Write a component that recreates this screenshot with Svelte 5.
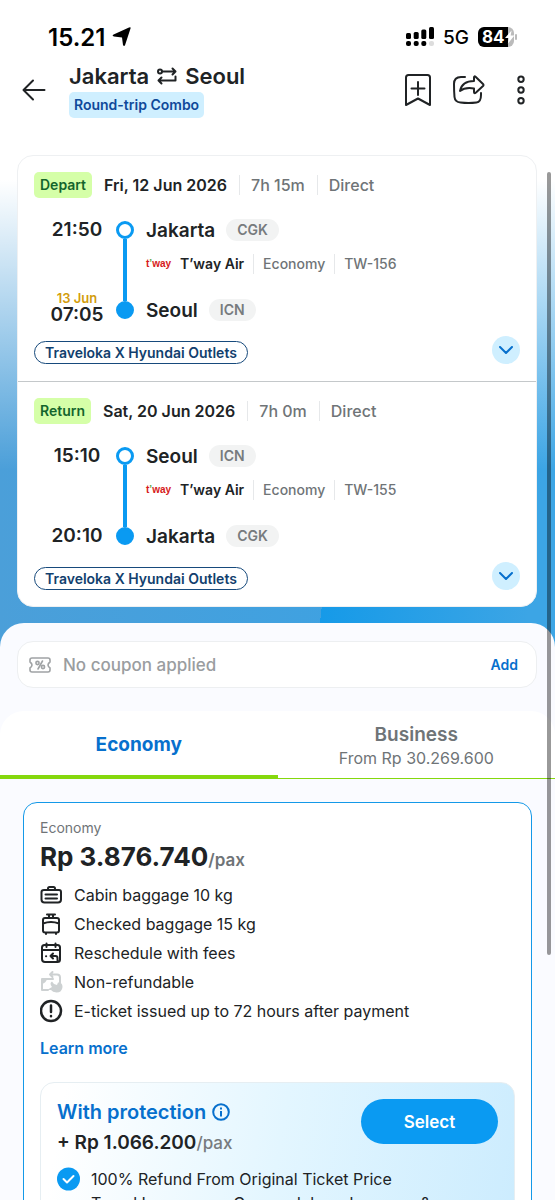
<script lang="ts">
	const legs = [
		{
			label: 'Depart',
			date: 'Fri, 12 Jun 2026',
			duration: '7h 15m',
			from: { time: '21:50', city: 'Jakarta', code: 'CGK' },
			to: { time: '07:05', day: '13 Jun', city: 'Seoul', code: 'ICN' },
			flight: 'TW-156'
		},
		{
			label: 'Return',
			date: 'Sat, 20 Jun 2026',
			duration: '7h 0m',
			from: { time: '15:10', city: 'Seoul', code: 'ICN' },
			to: { time: '20:10', day: '', city: 'Jakarta', code: 'CGK' },
			flight: 'TW-155'
		}
	];

	const perks = [
		{ icon: 'cabin', text: 'Cabin baggage 10 kg' },
		{ icon: 'checked', text: 'Checked baggage 15 kg' },
		{ icon: 'calendar', text: 'Reschedule with fees' },
		{ icon: 'refund', text: 'Non-refundable' },
		{ icon: 'alert', text: 'E-ticket issued up to 72 hours after payment' }
	];

	let cabin = $state('economy');
</script>

<div class="page">
	<div class="status">
		<span class="clock">15.21</span>
		<svg class="locate" width="20" height="20" viewBox="0 0 20 20"><path d="M18.5 1.500 L13 18.3 Q12 20 11 18 L10 10.500 L2 9.500 Q-.5 8.700 1.600 7.500 L17 .5 Q19.300 -.2 18.500 1.500Z" /></svg>
		<svg class="signal" width="28" height="20" viewBox="0 0 28 20">
			<rect x="0" y="6" width="5" height="6" rx="1.5" />
			<rect x="7.7" y="5" width="5" height="7" rx="1.5" />
			<rect x="15.3" y="2.5" width="5" height="9.5" rx="1.5" />
			<rect x="23" y="0" width="5" height="12" rx="1.5" />
			<rect x="0" y="14" width="5" height="5" rx="2" />
			<rect x="7.7" y="14" width="5" height="5" rx="2" />
			<rect x="15.3" y="14" width="5" height="5" rx="2" />
			<rect x="23" y="14" width="5" height="5" rx="2" fill="#ddd" />
		</svg>
		<span class="network">5G</span>
		<span class="battery">
			84
			<svg width="10" height="14" viewBox="0 0 10 14"><path d="M7 0 L0 8 H4 L3 14 L10 5.500 H6Z" fill="#fff" /></svg>
		</span>
		<i class="battery-tip"></i>
	</div>

	<header>
		<button class="icon-button" aria-label="Back">
			<svg width="24" height="24" viewBox="0 0 24 24" class="line"><path d="M22.500 12H2M11 2.500 1.500 12l9.500 9.500" /></svg>
		</button>
		<div class="heading">
			<h1>
				Jakarta
				<svg width="20" height="18" viewBox="0 0 20 18" class="line"><circle cx="3" cy="4.500" r="2" /><path d="M5 4.500H18.500M15.500 1.500l3 3-3 3M18.500 9.500v4H1.500M4.500 10.500l-3 3 3 3" /></svg>
				Seoul
			</h1>
			<span class="combo">Round-trip Combo</span>
		</div>
		<button class="icon-button" aria-label="Save">
			<svg width="26" height="32" viewBox="0 0 26 32" class="line"><path d="M1 31V3.500Q1 1 3.500 1H22.500Q25 1 25 3.500V31L13 24.500ZM13 8v13M6.500 14.500h13" /></svg>
		</button>
		<button class="icon-button share" aria-label="Share">
			<svg width="32" height="30" viewBox="0 0 32 30" class="line"><path d="M12 2H8Q1 2 1 9q0 7 .5 13 .5 5 6 5.500 8 1 16 0Q28 27 28 20v-2" /><path d="M7 16Q9 6 21 6V2.500Q21 .5 22.800 2L30 9q1 1 0 2l-7 6.500Q21 19 21 17v-3.500Q12 12 7 16Z" /></svg>
		</button>
		<button class="icon-button" aria-label="More options">
			<svg width="10" height="30" viewBox="0 0 10 30" class="line"><circle cx="5" cy="4.200" r="2.700" /><circle cx="5" cy="15" r="2.700" /><circle cx="5" cy="25.700" r="2.700" /></svg>
		</button>
	</header>

	<section class="hero">
		<div class="itinerary">
			{#each legs as leg}
				<article class="leg">
					<div class="leg-head">
						<span class="tag">{leg.label}</span>
						<strong>{leg.date}</strong>
						<span class="split">{leg.duration}</span>
						<span class="split">Direct</span>
					</div>
					<div class="route">
						<div class="times">
							<div class="stop-time">{leg.from.time}</div>
							<div class="stop-time">
								{#if leg.to.day}<small>{leg.to.day}</small>{/if}
								{leg.to.time}
							</div>
						</div>
						<div class="rail"><i class="dot"></i><i class="track"></i><i class="dot filled"></i></div>
						<div class="places">
							<div class="place">{leg.from.city}<span class="code">{leg.from.code}</span></div>
							<div class="airline">
								<span class="logo">t<b>’</b>way</span>
								<strong>T’way Air</strong>
								<span class="split">Economy</span>
								<span class="split">{leg.flight}</span>
							</div>
							<div class="place">{leg.to.city}<span class="code">{leg.to.code}</span></div>
						</div>
					</div>
					<div class="leg-foot">
						<span class="promo">Traveloka X Hyundai Outlets</span>
						<button class="expand" aria-label="Show {leg.label} details">
							<svg width="14" height="8" viewBox="0 0 14 8"><path d="M1 1l6 6 6-6" fill="none" stroke="#0770cd" stroke-width="2" stroke-linecap="round" stroke-linejoin="round" /></svg>
						</button>
					</div>
				</article>
			{/each}
		</div>
	</section>

	<main>
		<div class="coupon">
			<svg width="22" height="16" viewBox="0 0 22 16" fill="none" stroke="#a0a3a5" stroke-width="1.600" stroke-linejoin="round" stroke-linecap="round"><path d="M3 1H19Q21 1 21 3v2q-4 3 0 6v2q0 2-2 2H3Q1 15 1 13v-2Q5 8 1 5V3Q1 1 3 1Z" /><path d="M13.500 4 9 12" /><circle cx="8.500" cy="6" r="1.600" /><circle cx="14" cy="10" r="1.600" /></svg>
			<span>No coupon applied</span>
			<button>Add</button>
		</div>

		<div class="tabs" role="tablist">
			<button role="tab" class:active={cabin === 'economy'} aria-selected={cabin === 'economy'} onclick={() => (cabin = 'economy')}>
				<strong>Economy</strong>
			</button>
			<button role="tab" class:active={cabin === 'business'} aria-selected={cabin === 'business'} onclick={() => (cabin = 'business')}>
				<strong>Business</strong>
				<span>From Rp 30.269.600</span>
			</button>
		</div>

		<section class="fare">
			<p class="fare-name">Economy</p>
			<p class="price">Rp 3.876.740<span>/pax</span></p>
			<ul>
				{#each perks as perk}
					<li>
						<svg width="24" height="24" viewBox="0 0 24 24" class="perk {perk.icon}">
							{#if perk.icon === 'cabin'}
								<path d="M8 7V5.500Q8 4 9.500 4h4Q15 4 15 5.500V7M4 7H19Q21 7 21 9v7.500q0 3-3 3H4.500q-3 0-3-3V9Q1.500 7 4 7ZM5.500 11.500H17M5.500 15.500H17" />
							{:else if perk.icon === 'checked'}
								<path d="M7 2.500H15M9 2.500V6M13 2.500V6M5 6H17Q19 6 19 8V18.500q0 2-2 2H5q-2 0-2-2V8Q3 6 5 6ZM3 11.500Q11 8.500 19 11.500M6 21v1M16 21v1" />
							{:else if perk.icon === 'calendar'}
								<path d="M4.500 4h13Q20 4 20 6.500v12q0 2.500-2.500 2.500H5Q2 21 2 18V6.500Q2 4 4.500 4ZM2 9H20M6.500 2.500V6M15.500 2.500V6M17.500 19.500V17q0-2-2-2H10.500M13 12.500 10.500 15l2.500 2.500M6 15.200h.2" />
							{:else if perk.icon === 'refund'}
								<path d="M10 4.500h7q3 0 3 3v5M12.500 2 10 4.500 12.500 7M13 9H2V20H8" />
								<path class="solid" d="M2 9H7Q6 13 2 14ZM7 20 12 17Q9 13 12 11.500 L14 14 17 15 18 12.500Q22.500 12 22.500 17 22 22.500 16.500 22.500 12.500 22 11 20Z" />
							{:else}
								<circle cx="11" cy="12" r="10" /><path d="M11 6.500V13M11 17v.2" />
							{/if}
						</svg>
						{perk.text}
					</li>
				{/each}
			</ul>
			<a href="#details">Learn more</a>

			<div class="protection">
				<div class="protection-head">
					<div>
						<h2>
							With protection
							<svg width="18" height="18" viewBox="0 0 18 18" fill="none" stroke="#0770cd" stroke-width="2"><circle cx="9" cy="9" r="7.800" /><path d="M9 8v5.500M9 4.500v2" /></svg>
						</h2>
						<p class="extra">+ Rp 1.066.200<span>/pax</span></p>
					</div>
					<button class="select">Select</button>
				</div>
				<div class="benefit">
					<svg width="24" height="24" viewBox="0 0 24 24"><circle cx="11.500" cy="12" r="11.500" fill="#0a9af2" /><path d="M6.500 12l3.500 3.500L16.500 9" fill="none" stroke="#fff" stroke-width="2" stroke-linecap="round" stroke-linejoin="round" /></svg>
					<div>
						<p>100% Refund From Original Ticket Price</p>
						<p>Travel Insurance – Covers delays, baggage &amp;</p>
					</div>
				</div>
			</div>
		</section>
	</main>
	<div class="scrollbar"></div>
</div>

<style>
	:global(body) {
		margin: 0;
	}

	.page {
		position: relative;
		height: 100vh;
		overflow: hidden;
		background: #fff;
		color: #202325;
		font-family: Inter, 'Liberation Sans', sans-serif;
		font-weight: 400;
	}

	.page * {
		box-sizing: border-box;
	}

	h1, h2, p, ul {
		margin: 0;
		padding: 0;
	}

	button {
		border: 0;
		padding: 0;
		background: none;
		color: inherit;
		font: inherit;
		cursor: pointer;
	}

	strong {
		font-weight: 600;
	}

	.line {
		fill: none;
		stroke: #202325;
		stroke-width: 2;
		stroke-linecap: round;
		stroke-linejoin: round;
	}

	.status {
		display: flex;
		align-items: center;
		height: 60px;
		padding: 14px 38px 0 48px;
		color: #000;
	}

	.clock {
		font-size: 24px;
		font-weight: 600;
	}

	.locate {
		margin-left: 7px;
	}

	.signal {
		margin-left: auto;
	}

	.network {
		margin-left: 9px;
		font-size: 19px;
		font-weight: 500;
	}

	.battery {
		display: flex;
		align-items: center;
		width: 36px;
		height: 20px;
		margin-left: 9px;
		padding-left: 4px;
		border-radius: 6px;
		background: linear-gradient(90deg, #000 84%, #bbb 84%);
		color: #fff;
		font-size: 17px;
		font-weight: 700;
	}

	.battery-tip {
		width: 2px;
		height: 6px;
		margin-left: 1px;
		border-radius: 2px;
		background: #bbb;
	}

	header {
		display: flex;
		align-items: center;
		height: 60px;
		padding: 0 29px 0 22px;
	}

	.icon-button {
		display: flex;
		margin-left: 31px;
	}

	.icon-button:first-child {
		margin-left: 0;
	}

	.icon-button.share {
		margin-left: 22px;
	}

	.heading {
		flex: 1;
		margin-left: 23px;
	}

	h1 {
		display: flex;
		align-items: center;
		gap: 8px;
		font-size: 22px;
		font-weight: 600;
		line-height: 28px;
	}

	.combo {
		display: inline-block;
		margin-top: 2px;
		padding: 0 5px;
		border-radius: 5px;
		background: #cfefff;
		color: #10499a;
		font-size: 14px;
		font-weight: 600;
		line-height: 26px;
	}

	.hero {
		padding: 35px 18px 48px 17px;
		background:
			linear-gradient(180deg, #fff 0, #fff 60px, rgba(255, 255, 255, 0) 350px),
			linear-gradient(96deg, transparent 61%, #169ae8 61%, #3ca5e5 95%),
			linear-gradient(90deg, #4b9fd9, #37a3e6);
	}

	.itinerary {
		border: 1px solid #eef0f2;
		border-radius: 16px;
		background: #fff;
	}

	.leg {
		padding: 16px 16px 17px;
	}

	.leg + .leg {
		padding-bottom: 16px;
		border-top: 1px solid #c4c8ca;
	}

	.leg-head {
		display: flex;
		align-items: center;
		gap: 12px;
		height: 26px;
		font-size: 16px;
	}

	.tag {
		padding: 0 6px;
		border-radius: 5px;
		background: #d5ffa8;
		color: #13652c;
		font-size: 14px;
		font-weight: 600;
		line-height: 26px;
	}

	.split {
		padding-left: 11px;
		border-left: 1px solid #e6e8ea;
		color: #6f7477;
		font-weight: 500;
	}

	.route {
		display: flex;
		height: 108px;
		margin-top: 18px;
	}

	.times {
		display: flex;
		flex-direction: column;
		justify-content: space-between;
		width: 82px;
		padding-left: 4px;
		text-align: center;
	}

	.stop-time {
		display: flex;
		flex-direction: column;
		justify-content: center;
		min-height: 28px;
		font-size: 19px;
		font-weight: 600;
		line-height: 18px;
	}

	small {
		color: #d29c0c;
		font-size: 13px;
		line-height: 16px;
	}

	.rail {
		display: flex;
		flex-direction: column;
		align-items: center;
		width: 18px;
		padding: 5px 0;
	}

	.dot {
		width: 18px;
		height: 18px;
		border: 3px solid #0a9af2;
		border-radius: 50%;
	}

	.filled {
		background: #0a9af2;
	}

	.track {
		flex: 1;
		width: 4px;
		background: #0a9af2;
	}

	.places {
		margin-left: 12px;
	}

	.place {
		display: flex;
		align-items: center;
		gap: 11px;
		height: 28px;
		font-size: 19px;
		font-weight: 600;
	}

	.code {
		padding: 0 11px;
		border-radius: 12px;
		background: #f2f3f3;
		color: #777b7e;
		font-size: 14px;
		line-height: 22px;
	}

	.airline {
		display: flex;
		align-items: center;
		gap: 9px;
		margin: 10px 0 22px;
		font-size: 14px;
		line-height: 20px;
	}

	.airline .split {
		padding-left: 9px;
	}

	.logo {
		width: 25px;
		color: #d61920;
		font-family: 'Liberation Sans Narrow', 'Liberation Sans', sans-serif;
		font-size: 10px;
		font-weight: 700;
	}

	.logo b {
		color: #62a744;
	}

	.leg-foot {
		display: flex;
		align-items: flex-end;
		justify-content: space-between;
		margin-top: 12px;
	}

	.promo {
		padding: 0 10px;
		border: 1px solid #174a7c;
		border-radius: 12px;
		color: #123f6e;
		font-size: 14px;
		font-weight: 600;
		line-height: 21px;
	}

	.expand {
		display: flex;
		align-items: center;
		justify-content: center;
		width: 28px;
		height: 28px;
		border-radius: 50%;
		background: #cfefff;
	}

	main {
		position: relative;
		margin-top: -32px;
		padding-top: 18px;
		border-radius: 24px 24px 0 0;
		background: #fafbff;
	}

	.coupon {
		display: flex;
		align-items: center;
		gap: 12px;
		height: 47px;
		margin: 0 18px 0 17px;
		padding: 0 18px 0 11px;
		border: 1px solid #edeff1;
		border-radius: 16px;
		background: #fff;
		color: #9a9da0;
		font-size: 17px;
		font-weight: 500;
	}

	.coupon button {
		margin-left: auto;
		color: #0770cd;
		font-size: 14px;
		font-weight: 600;
	}

	.tabs {
		display: grid;
		grid-template-columns: 1fr 1fr;
		height: 68px;
		margin-top: 23px;
		border-radius: 24px 24px 0 0;
		background: #fff;
	}

	.tabs button {
		display: flex;
		flex-direction: column;
		align-items: center;
		justify-content: center;
		padding-top: 2px;
		border-bottom: 1px solid #85d80d;
		color: #6f7477;
		font-size: 16px;
		line-height: 22px;
	}

	.tabs strong {
		font-size: 19px;
		line-height: 24px;
	}

	.tabs .active {
		padding-top: 4px;
		border-bottom-width: 4px;
		color: #0770cd;
	}

	.active strong {
		font-weight: 700;
	}

	.fare {
		margin: 23px 23px 0;
		padding: 16px;
		border: 1px solid #1499e8;
		border-radius: 14px;
		background: #fff;
	}

	.fare-name {
		color: #6f7477;
		font-size: 14px;
		line-height: 18px;
	}

	.price {
		font-size: 26px;
		font-weight: 700;
		line-height: 39px;
	}

	.price span {
		color: #6f7477;
		font-size: 17px;
		font-weight: 600;
	}

	ul {
		list-style: none;
	}

	li {
		display: flex;
		align-items: center;
		gap: 10px;
		height: 29px;
		font-size: 16px;
	}

	.perk {
		fill: none;
		stroke: #202325;
		stroke-width: 2;
		stroke-linecap: round;
		stroke-linejoin: round;
	}

	.refund {
		stroke: #cdd1d2;
	}

	.alert {
		stroke-width: 2.500;
	}

	.solid {
		fill: #cdd1d2;
		stroke: none;
	}

	a {
		display: inline-block;
		margin-top: 12px;
		color: #0770cd;
		font-size: 16px;
		font-weight: 600;
		line-height: 22px;
		text-decoration: none;
	}

	.protection {
		margin-top: 23px;
		padding: 16px;
		border: 1px solid #e6eef2;
		border-radius: 14px;
		background: linear-gradient(100deg, #fff 5%, #e3f6ff 50%, #ccecfe);
	}

	.protection-head {
		display: flex;
		justify-content: space-between;
	}

	h2 {
		display: flex;
		align-items: center;
		gap: 6px;
		color: #0770cd;
		font-size: 20px;
		font-weight: 600;
		line-height: 26px;
	}

	.extra {
		margin-top: 4px;
		font-size: 19px;
		font-weight: 600;
		line-height: 28px;
	}

	.extra span {
		color: #777b7e;
		font-size: 17px;
		font-weight: 500;
	}

	.select {
		width: 137px;
		height: 45px;
		border-radius: 23px;
		background: #0a9af2;
		color: #fff;
		font-size: 17px;
		font-weight: 600;
	}

	.benefit {
		display: flex;
		align-items: flex-start;
		gap: 10px;
		margin-top: 10px;
		font-size: 16px;
		line-height: 24px;
	}

	.scrollbar {
		position: absolute;
		top: 172px;
		right: 4px;
		width: 4px;
		height: 783px;
		border-radius: 2px;
		background: rgba(0, 0, 0, 0.4);
	}
</style>
